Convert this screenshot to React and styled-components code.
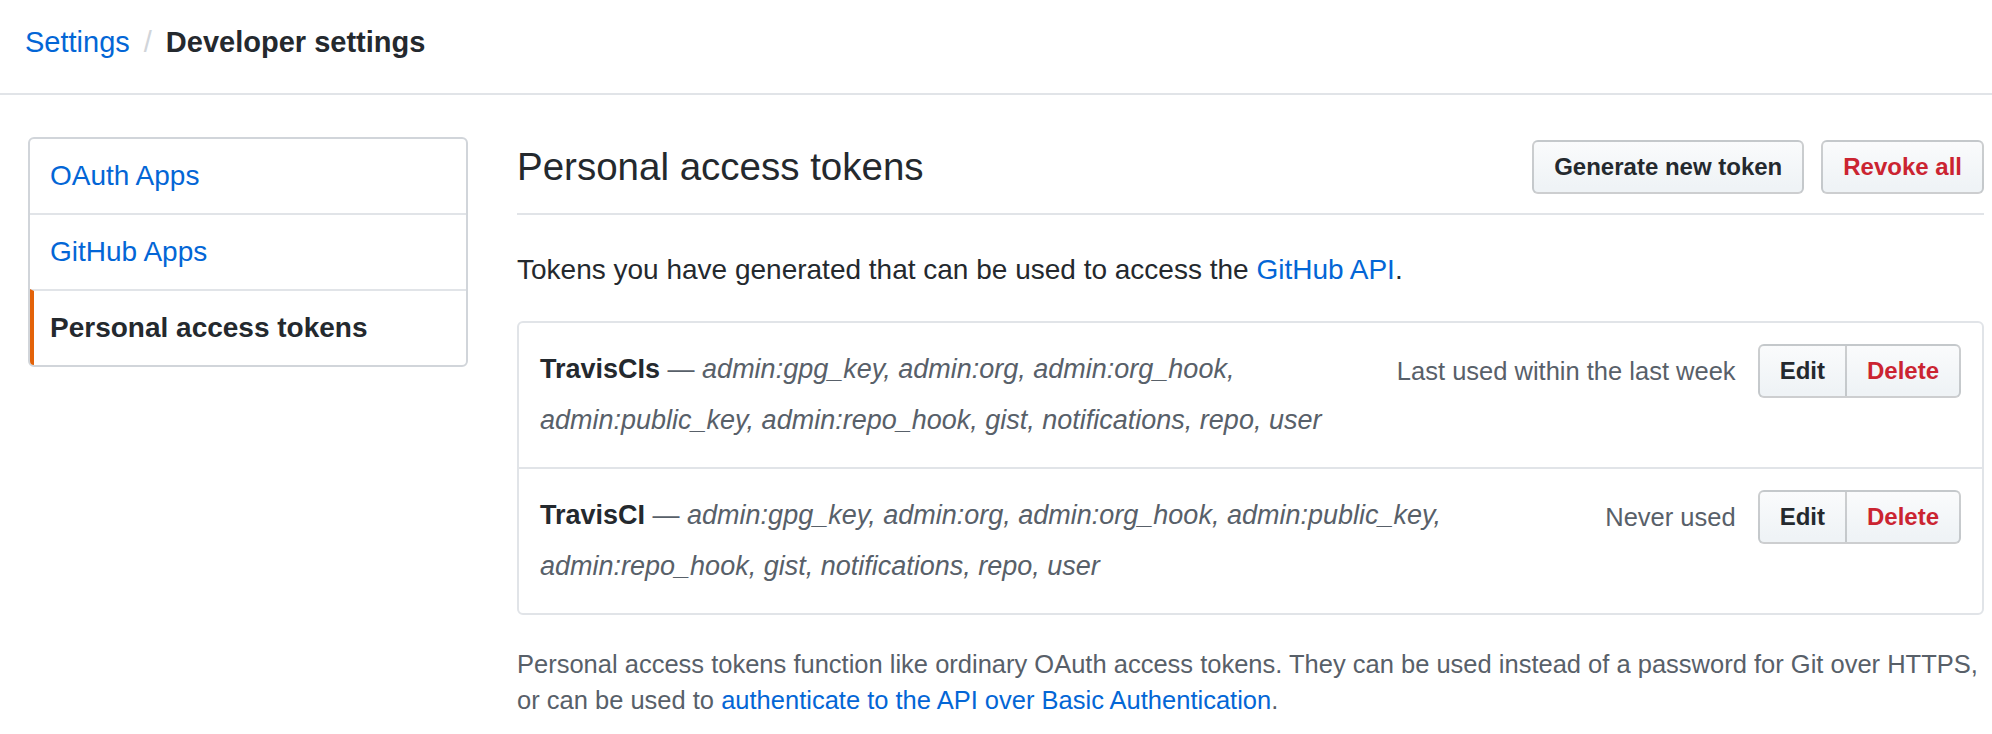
import React from 'react';
import styled, { createGlobalStyle } from 'styled-components';

const GlobalStyle = createGlobalStyle`
  body {
    margin: 0;
    background: #fff;
    font-family: "Liberation Sans", Arial, sans-serif;
    color: #24292e;
  }
`;

const tokens = [
  {
    name: 'TravisCIs',
    scopes: 'admin:gpg_key, admin:org, admin:org_hook, admin:public_key, admin:repo_hook, gist, notifications, repo, user',
    lastUsed: 'Last used within the last week',
  },
  {
    name: 'TravisCI',
    scopes: 'admin:gpg_key, admin:org, admin:org_hook, admin:public_key, admin:repo_hook, gist, notifications, repo, user',
    lastUsed: 'Never used',
  },
];

const menu = [
  { label: 'OAuth Apps' },
  { label: 'GitHub Apps' },
  { label: 'Personal access tokens', selected: true },
];

const App = () => {
  return (
    <>
      <GlobalStyle />
      <Header>
        <Crumb href="#">Settings</Crumb>
        <Slash>/</Slash>
        <CrumbCurrent>Developer settings</CrumbCurrent>
      </Header>
      <Page>
        <SideNav>
          {menu.map((item) => (
            <MenuItem key={item.label} selected={item.selected}>
              {item.label}
            </MenuItem>
          ))}
        </SideNav>
        <Main>
          <Subhead>
            <SubheadTitle>Personal access tokens</SubheadTitle>
            <Actions>
              <Button>Generate new token</Button>
              <Button danger>Revoke all</Button>
            </Actions>
          </Subhead>
          <Intro>
            Tokens you have generated that can be used to access the <Link href="#">GitHub API</Link>.
          </Intro>
          <TokenBox>
            {tokens.map((t) => (
              <TokenRow key={t.name}>
                <Description>
                  <strong>{t.name}</strong> — <em>{t.scopes}</em>
                </Description>
                <RowSide>
                  <LastUsed>{t.lastUsed}</LastUsed>
                  <ButtonGroup>
                    <GroupButton>Edit</GroupButton>
                    <GroupButton danger>Delete</GroupButton>
                  </ButtonGroup>
                </RowSide>
              </TokenRow>
            ))}
          </TokenBox>
          <Note>
            Personal access tokens function like ordinary OAuth access tokens. They can be used instead of a password for Git over HTTPS,
            or can be used to <Link href="#">authenticate to the API over Basic Authentication</Link>.
          </Note>
        </Main>
      </Page>
    </>
  );
};

const Header = styled.div`
  display: flex;
  align-items: center;
  box-sizing: border-box;
  height: 95px;
  padding: 0 25px 8px;
  border-bottom: 2px solid #e1e4e8;
  font-size: 29px;
`;

const Crumb = styled.a`
  color: #0366d6;
  text-decoration: none;
`;

const Slash = styled.span`
  color: #d1d5da;
  margin: 0 14px;
`;

const CrumbCurrent = styled.strong`
  font-weight: bold;
  color: #24292e;
`;

const Page = styled.div`
  display: flex;
  align-items: flex-start;
  gap: 49px;
  padding: 42px 8px 0 28px;
`;

const SideNav = styled.nav`
  width: 440px;
  flex-shrink: 0;
  border: 2px solid #d1d5da;
  border-radius: 6px;
  box-sizing: border-box;
  overflow: hidden;
`;

const MenuItem = styled.a`
  display: block;
  padding: 16px 20px 16px ${(p) => (p.selected ? '16px' : '20px')};
  font-size: 28px;
  line-height: 42px;
  color: ${(p) => (p.selected ? '#24292e' : '#0366d6')};
  font-weight: ${(p) => (p.selected ? 'bold' : 'normal')};
  border-left: ${(p) => (p.selected ? '4px solid #e36209' : 'none')};
  & + & {
    border-top: 2px solid #e1e4e8;
  }
`;

const Main = styled.div`
  flex: 1;
  min-width: 0;
`;

const Subhead = styled.div`
  display: flex;
  align-items: center;
  justify-content: space-between;
  padding: 3px 0 19px;
  border-bottom: 2px solid #e1e4e8;
`;

const SubheadTitle = styled.h2`
  margin: 0;
  font-size: 38.5px;
  font-weight: normal;
  color: #24292e;
`;

const Actions = styled.div`
  display: flex;
  gap: 17px;
`;

const Button = styled.button`
  font-family: inherit;
  font-size: 24px;
  font-weight: bold;
  line-height: 40px;
  padding: 5px 20px;
  color: ${(p) => (p.danger ? '#cb2431' : '#24292e')};
  background: linear-gradient(-180deg, #fafbfc 0%, #eff3f6 90%);
  border: 2px solid rgba(27, 31, 35, 0.2);
  border-radius: 6px;
  cursor: pointer;
`;

const Intro = styled.p`
  margin: 34px 0 30px;
  font-size: 28px;
  line-height: 42px;
`;

const Link = styled.a`
  color: #0366d6;
  text-decoration: none;
`;

const TokenBox = styled.div`
  border: 2px solid #e1e4e8;
  border-radius: 6px;
`;

const TokenRow = styled.div`
  display: flex;
  align-items: flex-start;
  gap: 20px;
  padding: 21px;
  & + & {
    border-top: 2px solid #e1e4e8;
  }
`;

const Description = styled.div`
  flex: 1;
  font-size: 27px;
  line-height: 51px;
  color: #586069;
  strong {
    color: #24292e;
  }
`;

const RowSide = styled.div`
  display: flex;
  align-items: center;
  gap: 22px;
  flex-shrink: 0;
  margin-top: 0;
`;

const LastUsed = styled.span`
  font-size: 25.5px;
  color: #586069;
`;

const ButtonGroup = styled.div`
  display: flex;
`;

const GroupButton = styled(Button)`
  border-radius: 0;
  &:first-child {
    border-radius: 6px 0 0 6px;
  }
  &:last-child {
    border-radius: 0 6px 6px 0;
    margin-left: -2px;
  }
`;

const Note = styled.p`
  margin: 31px 0 0;
  font-size: 25.5px;
  line-height: 36px;
  color: #586069;
`;

export default App;
